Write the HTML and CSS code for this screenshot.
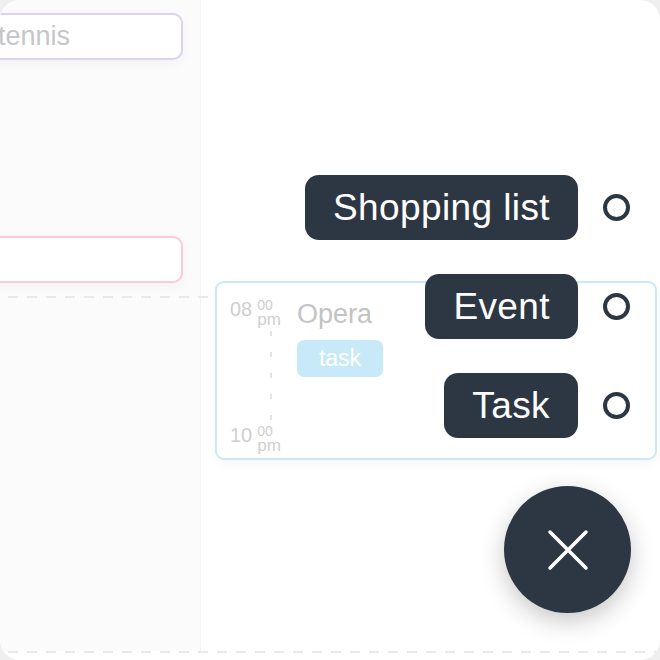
FILE: index.html
```html
<!DOCTYPE html>
<html lang="en">
<head>
    <meta charset="UTF-8">
    <meta name="viewport" content="width=device-width, initial-scale=1.0">
    <title>Agenda</title>
    <link rel="stylesheet" href="styles.css">
</head>
<body>
    <div class="screen">
        <div class="calendar">
            <div class="lane lane-side">
                <div class="slot slot-lilac">tennis</div>
                <div class="slot slot-rose"></div>
                <div class="rule rule-day"></div>
            </div>
            <div class="lane lane-main">
                <div class="event">
                    <div class="event-time">
                        <div class="clock">
                            <span class="clock-hour">08</span>
                            <span class="clock-sub">
                                <span class="clock-min">00</span>
                                <span class="clock-ampm">pm</span>
                            </span>
                        </div>
                        <div class="clock-line"></div>
                        <div class="clock">
                            <span class="clock-hour">10</span>
                            <span class="clock-sub">
                                <span class="clock-min">00</span>
                                <span class="clock-ampm">pm</span>
                            </span>
                        </div>
                    </div>
                    <div class="event-body">
                        <div class="event-title">Opera</div>
                        <span class="tag">task</span>
                    </div>
                </div>
            </div>
        </div>
        <div class="rule"></div>

        <!-- quick add menu, opened from the round button -->
        <div class="actions">
            <ul class="action-list">
                <li class="action">
                    <span class="action-label">Shopping list</span>
                    <span class="action-dot"></span>
                </li>
                <li class="action">
                    <span class="action-label">Event</span>
                    <span class="action-dot"></span>
                </li>
                <li class="action">
                    <span class="action-label">Task</span>
                    <span class="action-dot"></span>
                </li>
            </ul>
            <button class="fab" type="button">
                <svg width="42" height="42" viewBox="0 0 42 42">
                    <path d="M3 3 L39 39 M39 3 L3 39" stroke="#fff" stroke-width="3.5" stroke-linecap="round" fill="none"/>
                </svg>
            </button>
        </div>
    </div>
</body>
</html>
```

FILE: styles.css
```css
body {
    margin: 0;
    background-color: #efefef;
    font-family: "Liberation Sans", Arial, sans-serif;
}
.screen {
    position: relative;
    width: 660px;
    height: 660px;
    background-color: #fff;
    border-radius: 20px;
    overflow: hidden;
}
.calendar {
    display: flex;
    height: 651px;
}
.lane-side {
    flex: 0 0 200px;
    min-width: 0;
    padding-top: 13px;
    background-color: #fbfbfb;
    border-right: 1px solid #f3f3f3;
}
.lane-main {
    flex: 1;
    min-width: 0;
}
.slot {
    box-sizing: border-box;
    width: 223px;
    height: 47px;
    margin-left: -40px;
    padding-left: 36px;
    border: 2px solid;
    border-radius: 10px;
    background-color: #fff;
    box-shadow: 0 4px 14px rgba(0,0,0,0.035);
    font-size: 27px;
    line-height: 43px;
    color: #c6c6ca;
}
.slot-lilac {
    border-color: #ddd1f2;
}
.slot-rose {
    margin-top: 176px;
    border-color: #f9cbd9;
}
.rule {
    height: 2px;
    background-image: repeating-linear-gradient(90deg, transparent 0 8px, #e9e9e9 8px 18px, transparent 18px 19px);
}
.rule-day {
    width: 210px;
    margin-top: 13px;
}
.event {
    box-sizing: border-box;
    display: flex;
    height: 179px;
    margin: 281px 3px 0 14px;
    padding: 16px 13px 4px;
    border: 2px solid #c9e9f7;
    border-radius: 9px;
    background-color: #fff;
    box-shadow: 0 4px 12px rgba(0,0,0,0.03);
}
.event-time {
    display: flex;
    flex-direction: column;
    color: #cfcfcf;
}
.clock {
    display: flex;
    align-items: flex-start;
}
.clock-hour {
    font-size: 20px;
    line-height: 20px;
}
.clock-sub {
    display: flex;
    flex-direction: column;
    margin-left: 5px;
}
.clock-min {
    font-size: 14px;
    line-height: 13px;
}
.clock-ampm {
    font-size: 17px;
    line-height: 16px;
}
.clock-line {
    flex: 1;
    width: 2px;
    margin: 3px 0 5px 40px;
    background-image: repeating-linear-gradient(180deg, #e3e3e3 0 5px, transparent 5px 21px);
}
.event-body {
    margin-left: 16px;
}
.event-title {
    margin-top: -1px;
    font-size: 27px;
    line-height: 32px;
    color: #c3c3c5;
}
.tag {
    display: inline-block;
    margin-top: 10px;
    padding: 0 22px;
    height: 37px;
    line-height: 37px;
    font-size: 23px;
    color: #fff;
    background-color: #c8eaf8;
    border-radius: 7px;
}
.actions {
    position: absolute;
    right: 30px;
    bottom: 47px;
    display: flex;
    flex-direction: column;
    align-items: flex-end;
    gap: 48px;
}
.action-list {
    display: flex;
    flex-direction: column;
    align-items: flex-end;
    gap: 34px;
    margin: 0;
    padding: 0;
    list-style: none;
}
.action {
    display: flex;
    align-items: center;
    gap: 25px;
}
.action-label {
    height: 65px;
    padding: 0 28px;
    line-height: 65px;
    font-size: 37px;
    letter-spacing: 0.4px;
    color: #fff;
    background-color: #2d3744;
    border-radius: 14px;
}
.action-dot {
    box-sizing: border-box;
    width: 27px;
    height: 27px;
    border: 4px solid #2d3744;
    border-radius: 50%;
}
.fab {
    display: flex;
    align-items: center;
    justify-content: center;
    width: 127px;
    height: 127px;
    margin-right: -1px;
    padding: 0;
    border: none;
    border-radius: 50%;
    background-color: #2d3744;
    box-shadow: 0 8px 24px rgba(0,0,0,0.22);
    cursor: pointer;
}
```
